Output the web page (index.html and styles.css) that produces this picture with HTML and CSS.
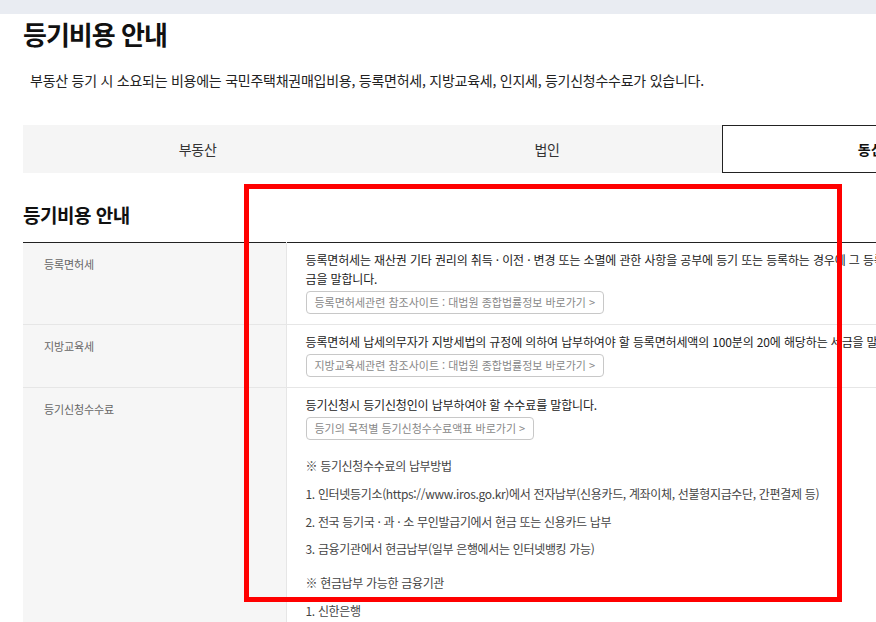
FILE: index.html
```html
<!DOCTYPE html>
<html lang="ko">
<head>
    <meta charset="UTF-8">
    <meta name="viewport" content="width=device-width, initial-scale=1.0">
    <title>등기비용 안내</title>
    <link rel="stylesheet" href="styles.css">
</head>
<body>
    <div class="top-bar"></div>

    <div class="wrap">
        <h1 class="page-title">등기비용 안내</h1>
        <p class="intro">부동산 등기 시 소요되는 비용에는 국민주택채권매입비용, 등록면허세, 지방교육세, 인지세, 등기신청수수료가 있습니다.</p>

        <ul class="tabs">
            <li>부동산</li>
            <li>법인</li>
            <li class="active">동산채권담보</li>
        </ul>

        <h2 class="section-title">등기비용 안내</h2>

        <table class="cost-table">
            <tr>
                <th>등록면허세</th>
                <td>
                    <p>등록면허세는 재산권 기타 권리의 취득 · 이전 · 변경 또는 소멸에 관한 사항을 공부에 등기 또는 등록하는 경우에 그 등록에 부과하는 세<br>금을 말합니다.</p>
                    <a class="link-btn">등록면허세관련 참조사이트 : 대법원 종합법률정보 바로가기 &gt;</a>
                </td>
            </tr>
            <tr>
                <th>지방교육세</th>
                <td>
                    <p>등록면허세 납세의무자가 지방세법의 규정에 의하여 납부하여야 할 등록면허세액의 100분의 20에 해당하는 세금을 말합니다.</p>
                    <a class="link-btn">지방교육세관련 참조사이트 : 대법원 종합법률정보 바로가기 &gt;</a>
                </td>
            </tr>
            <tr>
                <th>등기신청수수료</th>
                <td>
                    <p>등기신청시 등기신청인이 납부하여야 할 수수료를 말합니다.</p>
                    <a class="link-btn">등기의 목적별 등기신청수수료액표 바로가기 &gt;</a>

                    <div class="note">
                        <p class="note-title">※ 등기신청수수료의 납부방법</p>
                        <p>1. 인터넷등기소(https://www.iros.go.kr)에서 전자납부(신용카드, 계좌이체, 선불형지급수단, 간편결제 등)</p>
                        <p>2. 전국 등기국 · 과 · 소 무인발급기에서 현금 또는 신용카드 납부</p>
                        <p>3. 금융기관에서 현금납부(일부 은행에서는 인터넷뱅킹 가능)</p>
                        <p class="note-title">※ 현금납부 가능한 금융기관</p>
                        <p>1. 신한은행</p>
                        <p>2. 우리은행</p>
                    </div>
                </td>
            </tr>
        </table>
    </div>

    <div class="highlight"></div>
</body>
</html>
```

FILE: styles.css
```css
* {
    margin: 0;
    padding: 0;
    box-sizing: border-box;
}

body {
    font-family: "Noto Sans CJK KR", "Noto Sans", sans-serif;
    color: #222;
    background: #fff;
    overflow: hidden;
}

.top-bar {
    height: 14px;
    background: #e9ecf2;
}

.wrap {
    width: 1050px;
    margin-left: 23px;
}

.page-title {
    margin-top: 2px;
    font-size: 26px;
    line-height: 36px;
    font-weight: 700;
    letter-spacing: -1px;
    color: #111;
}

.intro {
    margin-top: 18px;
    padding-left: 7px;
    font-size: 14px;
    line-height: 20px;
    letter-spacing: -0.25px;
}

.tabs {
    display: flex;
    margin-top: 35px;
    list-style: none;
    background: #f5f5f5;
}

.tabs li {
    flex: 1;
    height: 48px;
    display: flex;
    align-items: center;
    justify-content: center;
    font-size: 14px;
    letter-spacing: -0.3px;
    color: #333;
}

.tabs li.active {
    background: #fff;
    border: 1px solid #222;
    font-weight: 700;
    letter-spacing: 0.3px;
    color: #111;
}

.section-title {
    margin-top: 28px;
    font-size: 19px;
    line-height: 28px;
    font-weight: 700;
    letter-spacing: -0.5px;
    color: #111;
}

.cost-table {
    margin-top: 13px;
    width: 100%;
    border-collapse: collapse;
    border-top: 1px solid #222;
}

.cost-table tr {
    border-bottom: 1px solid #e6e6e6;
}

.cost-table th {
    width: 263px;
    padding: 12px 21px;
    background: #f6f6f6;
    border-right: 1px solid #e6e6e6;
    vertical-align: top;
    text-align: left;
    font-size: 11px;
    line-height: 19px;
    font-weight: 400;
    letter-spacing: -0.1px;
    color: #666;
}

.cost-table td {
    padding: 7px 19px 10px;
    vertical-align: top;
    font-size: 12px;
    line-height: 19px;
    letter-spacing: -0.15px;
}

.link-btn {
    display: block;
    width: fit-content;
    margin-top: 3px;
    height: 23px;
    padding: 0 8px;
    border: 1px solid #c8c8c8;
    border-radius: 4px;
    font-size: 11px;
    line-height: 21px;
    letter-spacing: 0;
    color: #888;
    cursor: pointer;
}

.note {
    margin-top: 16px;
    color: #444;
    letter-spacing: -0.33px;
}

.note p {
    margin-top: 8.5px;
}

.note p:first-child {
    margin-top: 0;
}

.note .note-title + p {
    margin-top: 9px;
}

.note p + .note-title {
    margin-top: 15px;
}

.highlight {
    position: absolute;
    left: 244px;
    top: 184px;
    width: 598px;
    height: 418px;
    border: 5px solid #ff0000;
}
```
